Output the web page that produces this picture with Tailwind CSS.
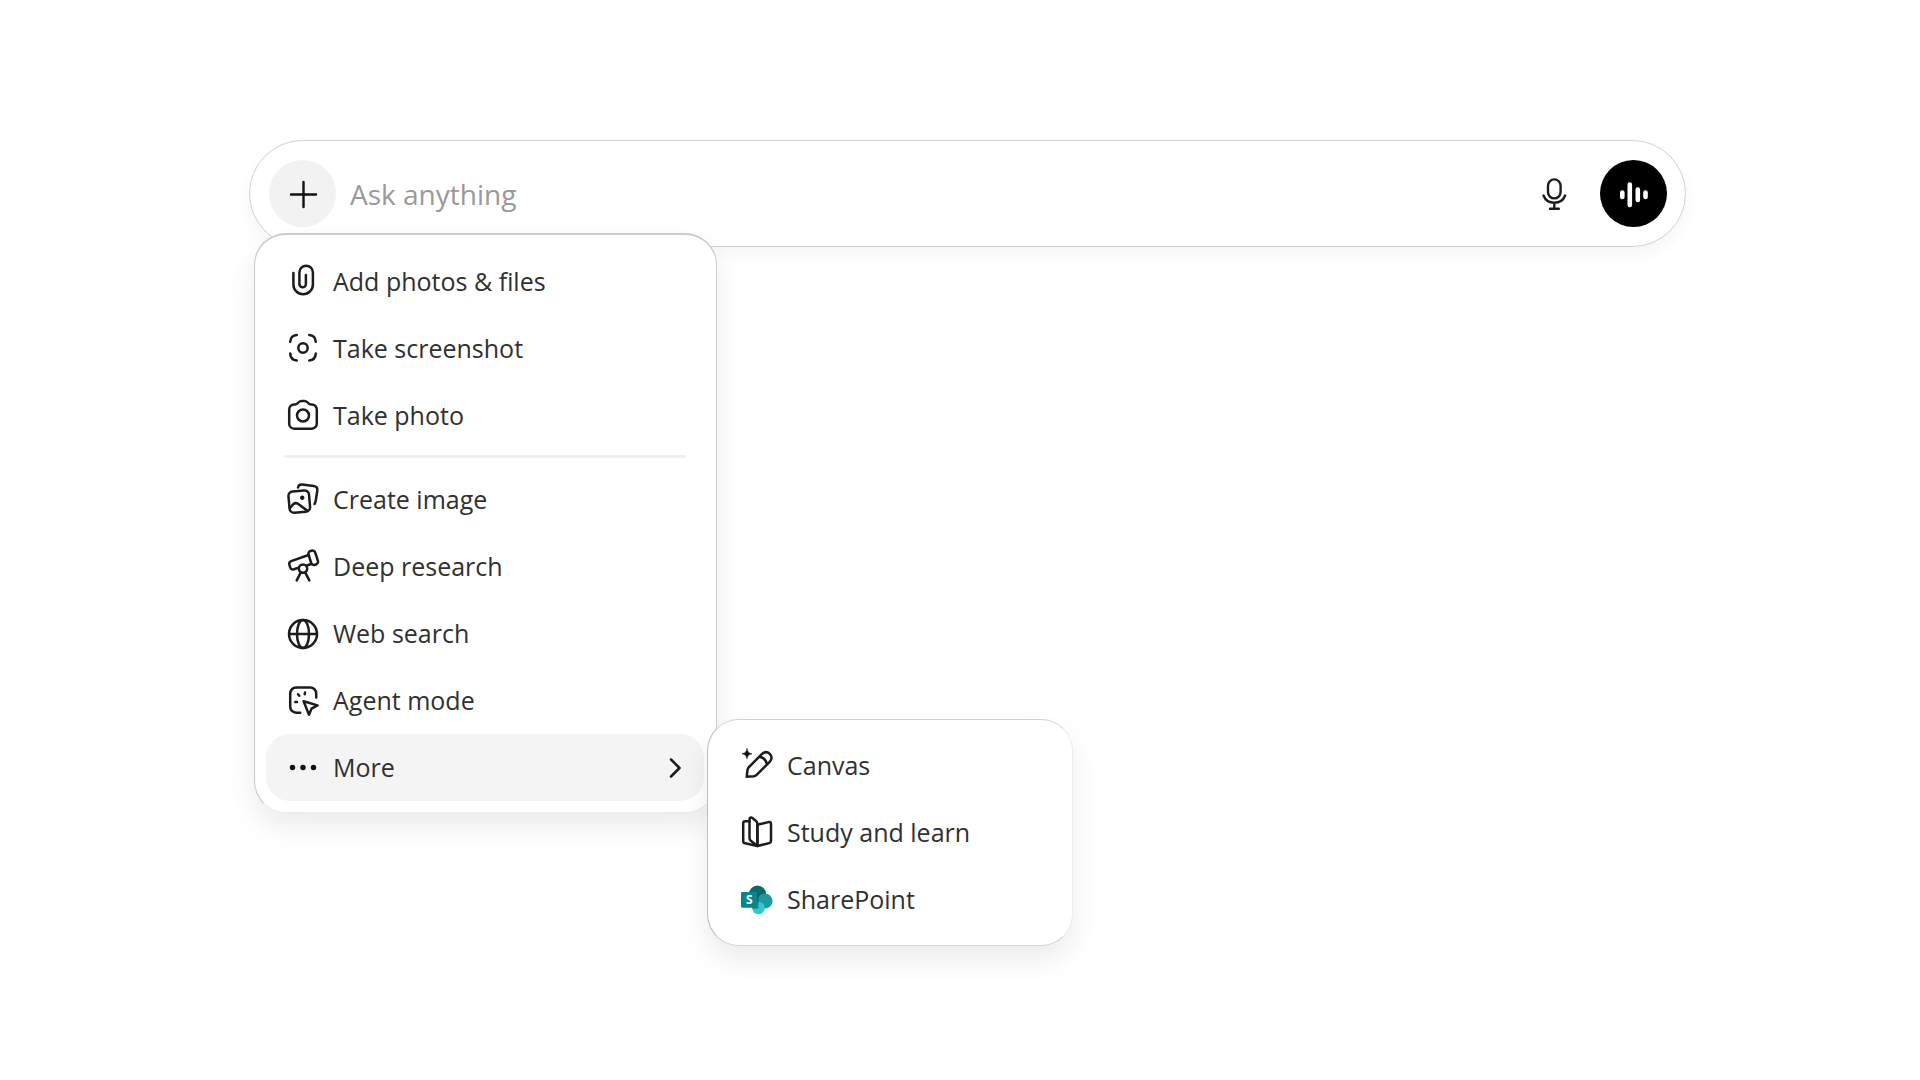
<!DOCTYPE html>
<html lang="en">
<head>
<meta charset="utf-8">
<meta name="viewport" content="width=device-width, initial-scale=1">
<title>Ask anything</title>
<script src="https://cdn.jsdelivr.net/npm/@tailwindcss/browser@4"></script>
</head>
<body class="min-h-screen bg-white font-['Open_Sans','Noto_Sans',sans-serif] text-[#303030]">
<main class="pt-[140px] pr-[234px] pl-[249px]">
  <div class="relative">
    <form class="flex h-[107px] items-center rounded-full border border-[#d2d2d2] bg-white pr-[18px] pl-[19px] shadow-[0_8px_16px_rgba(0,0,0,0.04)]">
      <button type="button" aria-label="Add files and more" aria-expanded="true" class="flex size-[67px] shrink-0 items-center justify-center rounded-full bg-[#f2f2f2]">
        <svg class="size-9" viewBox="0 0 36 36" fill="none" stroke="#111" stroke-width="2.4" stroke-linecap="round"><path d="M18.500 6v25M6 18.500h25"/></svg>
      </button>
      <input type="text" aria-label="Ask anything" placeholder="Ask anything" class="ml-[14px] min-w-0 flex-1 bg-transparent text-[28px] text-[#303030] outline-none placeholder:text-[#999]">
      <button type="button" aria-label="Dictate" class="mr-[28px] flex size-9 items-center justify-center">
        <svg class="size-9" viewBox="0 0 36 36" fill="none" stroke="#1c1c1c" stroke-width="2.4" stroke-linecap="round" stroke-linejoin="round"><rect x="12" y="3.4" width="12.6" height="19" rx="6.3"/><path d="M7.5 19.5c1.8 4.7 5.9 7.3 10.800 7.300s9-2.600 10.800-7.300M18.300 27v5.600M14 32.800h8.800"/></svg>
      </button>
      <button type="button" aria-label="Use voice mode" class="flex size-[67px] shrink-0 items-center justify-center rounded-full bg-black">
        <svg class="size-9" viewBox="0 0 36 36" fill="none" stroke="#fff" stroke-width="4.600" stroke-linecap="round"><path d="M6.300 16.500v4.500M13.800 8.500v20.500M21.800 13.500v10.500M29.500 16.500v4.500"/></svg>
      </button>
    </form>

    <div role="menu" class="absolute top-[93px] left-[5px] w-[463px] rounded-[32px] border border-t-2 border-[#cbcbcb] border-b-[#ececec] bg-white pt-[13px] pr-3 pb-[11px] pl-[11px] text-[25px] shadow-[0_14px_28px_rgba(0,0,0,0.08)]">
      <button role="menuitem" class="flex h-[67px] w-full items-center gap-3 rounded-[24px] px-[19px]">
        <svg class="size-9" viewBox="0 0 36 36" fill="none" stroke="#1c1c1c" stroke-width="2.5" stroke-linecap="round"><path d="M8.400 9v11.500a9.750 9.750 0 0 0 19.500 0V8.500a6.750 6.750 0 0 0-13.500 0V20a3.250 3.250 0 0 0 6.500 0v-9"/></svg>
        <span>Add photos &amp; files</span>
      </button>
      <button role="menuitem" class="flex h-[67px] w-full items-center gap-3 rounded-[24px] px-[19px]">
        <svg class="size-9" viewBox="0 0 36 36" fill="none" stroke="#1c1c1c" stroke-width="2.5" stroke-linecap="round"><circle cx="18" cy="17" r="4.700"/><path d="M5.200 10.800c.3-4.300 2.500-6.600 6.600-6.900M24.200 3.900c4.100.3 6.300 2.600 6.600 6.900M30.800 22.600c-.3 4.300-2.500 6.600-6.600 6.900M11.800 29.500c-4.100-.3-6.300-2.600-6.600-6.900"/></svg>
        <span>Take screenshot</span>
      </button>
      <button role="menuitem" class="flex h-[67px] w-full items-center gap-3 rounded-[24px] px-[19px]">
        <svg class="size-9" viewBox="0 0 36 36" fill="none" stroke="#1c1c1c" stroke-width="2.5" stroke-linejoin="round"><path d="M4.200 11.500a5 5 0 0 1 5-5h.8c1.600 0 2.300-.6 3-1.600.9-1.300 2-2 3.600-2h2.800c1.600 0 2.700.7 3.600 2 .7 1 1.400 1.600 3 1.600h.8a5 5 0 0 1 5 5v14.200a5 5 0 0 1-5 5H9.200a5 5 0 0 1-5-5z"/><circle cx="18" cy="17.500" r="6"/></svg>
        <span>Take photo</span>
      </button>
      <div role="separator" class="mx-[18px] mt-[6px] mb-2 h-[3px] bg-[#f0f0f0]"></div>
      <button role="menuitem" class="flex h-[67px] w-full items-center gap-3 rounded-[24px] px-[19px]">
        <svg class="size-9" viewBox="0 0 36 36" fill="none" stroke="#1c1c1c" stroke-width="2.5" stroke-linecap="round" stroke-linejoin="round"><g transform="rotate(-5 14.300 20)"><rect x="4" y="9" width="20.600" height="21.200" rx="4.500"/><path d="M4.500 25l3.700-3.300c1.500-1.200 3-1.200 4.500 0l8.800 7.600"/><circle cx="17.600" cy="16" r="1.500" fill="#1c1c1c" stroke-width="1.500"/></g><path d="M13 5.500c.5-2.300 2-3.300 4.200-3l11.500 1.400c2.800.4 4 2 3.600 4.600l-1.500 9.800c-.3 1.700-.6 2.700-1.300 3.700"/></svg>
        <span>Create image</span>
      </button>
      <button role="menuitem" class="flex h-[67px] w-full items-center gap-3 rounded-[24px] px-[19px]">
        <svg class="size-9" viewBox="0 0 36 36" fill="none" stroke="#1c1c1c" stroke-width="2.5" stroke-linecap="round" stroke-linejoin="round"><rect x="24.700" y="1.500" width="7" height="14.500" rx="3" transform="rotate(-18 28.200 8.700)"/><path d="M23.500 6L6.200 12.100c-1.700.7-2.300 2-1.800 3.700l.9 2.800c.6 1.600 1.900 2.200 3.500 1.700l5-1.700M22.300 16.300l4-1.300"/><circle cx="18" cy="19.600" r="4.200"/><path d="M15.700 23.600l-4 7.800M20.300 23.600l4 7.800"/></svg>
        <span>Deep research</span>
      </button>
      <button role="menuitem" class="flex h-[67px] w-full items-center gap-3 rounded-[24px] px-[19px]">
        <svg class="size-9" viewBox="0 0 36 36" fill="none" stroke="#1c1c1c" stroke-width="2.5"><circle cx="18" cy="18" r="14"/><ellipse cx="18" cy="18" rx="6" ry="14"/><path d="M4 18h28"/></svg>
        <span>Web search</span>
      </button>
      <button role="menuitem" class="flex h-[67px] w-full items-center gap-3 rounded-[24px] px-[19px]">
        <svg class="size-9" viewBox="0 0 36 36" fill="none" stroke="#1c1c1c" stroke-width="2.500" stroke-linecap="round" stroke-linejoin="round"><path d="M31.200 14.500V10.500a6 6 0 0 0-6-6H11.200a6 6 0 0 0-6 6v13.200a6 6 0 0 0 6 6h4"/><path d="M18.600 18.200l14 4.200-6.100 3.300-2.500 6z"/><path d="M13 11.200l1.300 1.600M20 9.600l-.3 1.600M10.300 19h1.700"/></svg>
        <span>Agent mode</span>
      </button>
      <button role="menuitem" aria-haspopup="menu" aria-expanded="true" class="flex h-[67px] w-full items-center gap-3 rounded-[24px] bg-[#f4f4f4] px-[19px]">
        <svg class="size-9" viewBox="0 0 36 36" fill="#111"><circle cx="7.500" cy="17.500" r="2.700"/><circle cx="18" cy="17.500" r="2.700"/><circle cx="28.500" cy="17.500" r="2.700"/></svg>
        <span>More</span>
        <svg class="ml-auto h-6 w-5" viewBox="0 0 20 24" fill="none" stroke="#1c1c1c" stroke-width="2.500" stroke-linecap="round" stroke-linejoin="round"><path d="M6 3.500l8.500 8.500L6 20.500"/></svg>
      </button>
    </div>

    <div role="menu" class="absolute top-[579px] left-[458px] w-[366px] rounded-[32px] border border-[#d2d2d2] border-l-[#bdbdbd] border-r-[#ececec] bg-white px-3 pt-3 pb-3 text-[25px] shadow-[0_14px_28px_rgba(0,0,0,0.08)]">
      <button role="menuitem" class="flex h-[67px] w-full items-center gap-3 px-[19px]">
        <svg class="size-9" viewBox="0 0 36 36" fill="none" stroke="#1c1c1c" stroke-width="2.500" stroke-linecap="round" stroke-linejoin="round"><path d="M7.700 28.800l.8-6.800c.2-1.300.6-2.100 1.500-3L22.800 6.100c2.600-2.500 5.600-2.500 8-.2 2.400 2.400 2.400 5.400-.1 7.900L17.900 26.700c-.9.900-1.700 1.300-3 1.500zM20.300 8.700c4 .6 6.800 3.400 7.600 7.600"/><path d="M8 .8c.6 3.300 1.700 4.400 5 5-3.300.6-4.400 1.700-5 5-.6-3.300-1.700-4.400-5-5 3.300-.6 4.400-1.700 5-5z" fill="#111" stroke="#111" stroke-width=".6"/></svg>
        <span>Canvas</span>
      </button>
      <button role="menuitem" class="flex h-[67px] w-full items-center gap-3 px-[19px]">
        <svg class="size-9" viewBox="0 0 36 36" fill="none" stroke="#1c1c1c" stroke-width="2.500" stroke-linecap="round" stroke-linejoin="round"><path d="M10.500 6.200H6.200c-1.300 0-2 .7-2 2v18c0 1.200.7 1.900 1.900 2.100l12.300 2.700M18.400 31V11.500c0-1.200.5-1.900 1.700-2.200l9.500-2.200c1.500-.3 2.400.4 2.400 1.800V26c0 1.200-.5 1.800-1.700 2.100z"/><path d="M18.400 31l-6.600-5.200c-.9-.7-1.300-1.500-1.300-2.700V4.500c0-1.800 1.400-2.500 2.900-1.400l3.600 2.800c1 .8 1.400 1.500 1.400 2.800z"/></svg>
        <span>Study and learn</span>
      </button>
      <button role="menuitem" class="flex h-[67px] w-full items-center gap-3 px-[19px]">
        <svg class="size-9" viewBox="0 0 36 36"><circle cx="18.500" cy="12" r="8.600" fill="#056c70"/><circle cx="26" cy="19" r="7.600" fill="#1a9ba1"/><circle cx="19.500" cy="26" r="6.300" fill="#37c6d0"/><path d="M11 10.500h8.600v14.700c0 1-.6 1.600-1.600 1.600h-4.700z" fill="#03484b" opacity=".45"/><rect x="2" y="10" width="16.300" height="15.800" rx="1.300" fill="#06878c"/><text x="10.200" y="22.300" text-anchor="middle" font-family="'Open Sans',sans-serif" font-size="12" font-weight="700" fill="#fff">S</text></svg>
        <span>SharePoint</span>
      </button>
    </div>
  </div>
</main>
</body>
</html>
